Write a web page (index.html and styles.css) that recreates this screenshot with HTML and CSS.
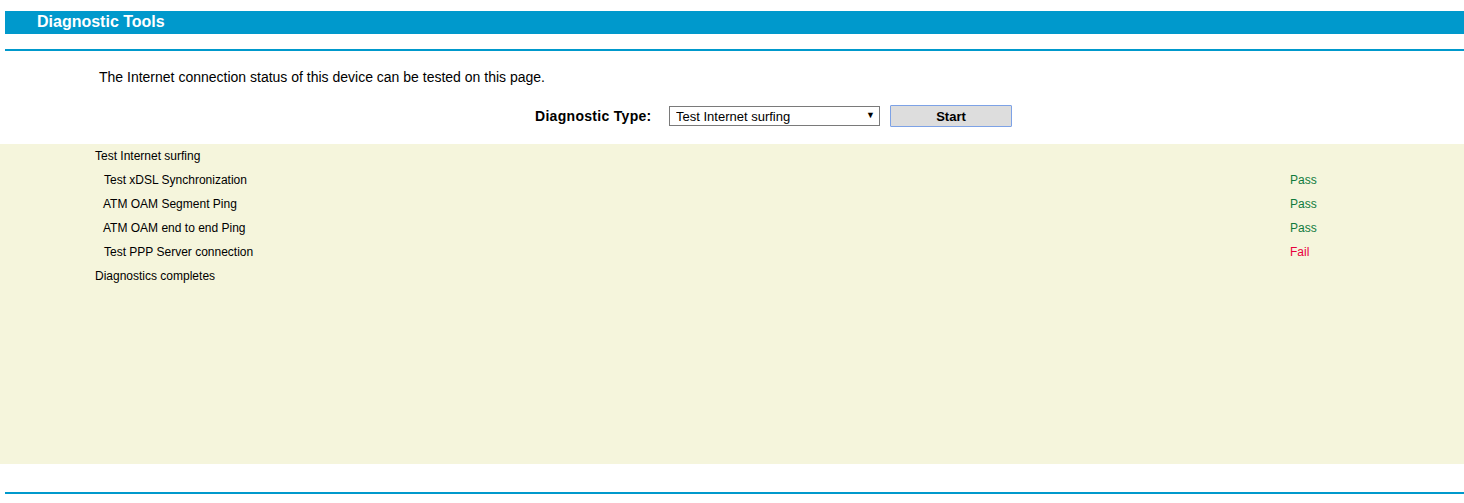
FILE: index.html
```html
<!DOCTYPE html>
<html lang="en">
<head>
  <meta charset="UTF-8" />
  <title>Diagnostic Tools</title>
  <link rel="stylesheet" href="styles.css">
</head>
<body>

  <div class="title-bar">Diagnostic Tools</div>
  <div class="rule"></div>

  <p class="intro">The Internet connection status of this device can be tested on this page.</p>

  <form class="diag-form" onsubmit="return false;">
    <label class="diag-label" for="diagType">Diagnostic Type:</label>
    <span class="select-wrap">
      <select id="diagType" class="diag-select">
        <option>Test Internet surfing</option>
      </select>
      <span class="select-arrow">&#9660;</span>
    </span>
    <button type="submit" class="start-btn">Start</button>
  </form>

  <div class="result-box">
    <div class="row">
      <span class="name">Test Internet surfing</span>
    </div>
    <div class="row sub nudge">
      <span class="name">Test xDSL Synchronization</span>
      <span class="status pass">Pass</span>
    </div>
    <div class="row sub">
      <span class="name">ATM OAM Segment Ping</span>
      <span class="status pass">Pass</span>
    </div>
    <div class="row sub">
      <span class="name">ATM OAM end to end Ping</span>
      <span class="status pass">Pass</span>
    </div>
    <div class="row sub nudge">
      <span class="name">Test PPP Server connection</span>
      <span class="status fail">Fail</span>
    </div>
    <div class="row">
      <span class="name">Diagnostics completes</span>
    </div>
  </div>

  <div class="rule bottom"></div>

</body>
</html>
```

FILE: styles.css
```css
body {
  font-family: Arial, "Liberation Sans", sans-serif;
  background: #fff;
  color: #000;
  margin: 0;
  padding: 0;
}
.title-bar {
  margin: 11px 0 0 5px;
  height: 23px;
  line-height: 22px;
  padding-left: 32px;
  background: #0099cc;
  color: #fff;
  font-weight: bold;
  font-size: 16px;
}
.rule {
  margin: 15px 0 0 5px;
  height: 2px;
  background: #0099cc;
}
.rule.bottom {
  margin-top: 28px;
}
.intro {
  margin: 18px 0 0 99px;
  font-size: 14px;
  line-height: 16px;
}
.diag-form {
  display: flex;
  align-items: center;
  margin: 20px 0 0 535px;
  height: 22px;
}
.diag-label {
  font-weight: bold;
  font-size: 14px;
  letter-spacing: 0.3px;
  width: 134px;
}
.select-wrap {
  position: relative;
  display: inline-block;
}
.diag-select {
  appearance: none;
  -webkit-appearance: none;
  width: 211px;
  height: 20px;
  padding: 0 0 0 6px;
  border: 1px solid #7a7a7a;
  border-radius: 0;
  background: #fff;
  font-family: Arial, "Liberation Sans", sans-serif;
  font-size: 13px;
  color: #000;
}
.select-arrow {
  position: absolute;
  right: 5px;
  top: 4px;
  font-size: 9px;
  pointer-events: none;
}
.start-btn {
  margin-left: 10px;
  width: 122px;
  height: 22px;
  padding: 0;
  background: #dddddd;
  border: 1px solid #7da2e6;
  border-radius: 1px;
  font-family: Arial, "Liberation Sans", sans-serif;
  font-weight: bold;
  font-size: 13px;
  color: #000;
  cursor: pointer;
}
.result-box {
  margin-top: 17px;
  height: 320px;
  background: #f5f5dc;
  font-size: 12px;
}
.row {
  display: flex;
  height: 24px;
  line-height: 24px;
  padding-left: 95px;
}
.row.sub {
  padding-left: 103px;
}
.row.sub.nudge {
  padding-left: 104px;
}
.row .name {
  flex: 1;
}
.row .status {
  width: 174px;
}
.status.pass {
  color: #107b3c;
}
.status.fail {
  color: #e8003c;
}
```
